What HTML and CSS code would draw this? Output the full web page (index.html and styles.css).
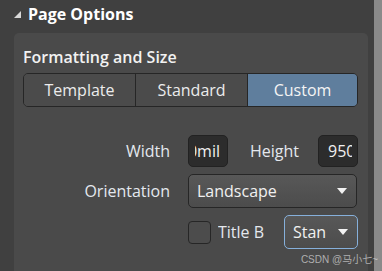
FILE: index.html
```html
<!DOCTYPE html>
<html>
<head>
<meta charset="utf-8">
<link rel="stylesheet" href="styles.css">
</head>
<body>
<div class="frame">
  <div class="main">
    <div class="header">
      <span class="caret"></span>
      <span class="header-title">Page Options</span>
    </div>
    <div class="panel">
      <div class="section-title">Formatting and Size</div>
      <div class="segmented">
        <div class="seg">Template</div>
        <div class="seg">Standard</div>
        <div class="seg active">Custom</div>
      </div>
      <div class="form">
        <div class="row">
          <div class="label">Width</div>
          <div class="field small"><div class="clip end"><span>1000mil</span></div></div>
          <div class="label mid">Height</div>
          <div class="field small"><div class="clip"><span>9500mil</span></div></div>
        </div>
        <div class="row">
          <div class="label">Orientation</div>
          <div class="select wide"><span>Landscape</span><span class="arrow"></span></div>
        </div>
        <div class="row">
          <div class="label"></div>
          <div class="check"></div>
          <div class="check-label">Title B</div>
          <div class="select focus narrow"><span>Stan</span><span class="arrow"></span></div>
        </div>
      </div>
    </div>
  </div>
  <div class="strip"></div>
</div>
<div class="watermark">CSDN @马小七~</div>
</body>
</html>
```
FILE: styles.css
```css
html, body {
  margin: 0;
  padding: 0;
}
body {
  width: 382px;
  height: 271px;
  overflow: hidden;
  background: #404040;
  font-family: "Open Sans", "Noto Sans", "Noto Sans CJK SC", sans-serif;
  color: #e8e8e8;
  position: relative;
}
.frame {
  display: flex;
  height: 271px;
}
.main {
  flex: 1;
  display: flex;
  flex-direction: column;
}
.strip {
  width: 9px;
  background: #8a8a8a;
}
.header {
  height: 33px;
  display: flex;
  align-items: center;
  padding-left: 14px;
  box-sizing: border-box;
  padding-bottom: 5px;
}
.caret {
  width: 0;
  height: 0;
  border-left: 7px solid transparent;
  border-bottom: 7px solid #d8d8d8;
  margin-right: 7px;
}
.header-title {
  font-weight: 700;
  font-size: 16px;
  color: #ffffff;
}
.panel {
  flex: 1;
  margin-left: 14px;
  margin-right: 6px;
  background: #4a4a4a;
  border-radius: 5px 5px 0 0;
  padding: 14px 10px 0 9px;
}
.section-title {
  font-size: 16px;
  font-weight: 600;
  color: #f2f2f2;
  line-height: 20px;
  height: 26px;
}
.segmented {
  display: flex;
  height: 34px;
  box-sizing: border-box;
  border: 1px solid #262626;
  border-radius: 5px;
  overflow: hidden;
}
.seg {
  flex: 1;
  display: flex;
  align-items: center;
  justify-content: center;
  font-size: 16px;
  color: #ececec;
  background: #4b4b4b;
}
.seg + .seg {
  border-left: 1px solid #262626;
}
.seg.active {
  background: #5f7e9d;
  color: #f4f4f4;
  flex: 0 0 109px;
}
.form {
  margin-top: 28px;
  display: flex;
  flex-direction: column;
  gap: 7px;
}
.row {
  display: flex;
  align-items: center;
  height: 34px;
}
.row:first-child {
  height: 32px;
}
.label {
  width: 147px;
  text-align: right;
  font-size: 16px;
  color: #e4e8ee;
  margin-right: 18px;
}
.label.mid {
  width: auto;
  margin: 0 19px 0 22px;
}
.field {
  height: 32px;
  box-sizing: border-box;
  background: #2c2c2c;
  border: 1px solid #222;
  border-radius: 5px;
  display: flex;
  align-items: center;
  font-size: 16px;
  color: #f0f0f0;
}
.field.small {
  width: 40px;
  padding: 0 5px 0 6px;
}
.clip {
  flex: 1;
  overflow: hidden;
  white-space: nowrap;
  display: flex;
}
.clip.end {
  justify-content: flex-end;
  padding-right: 2px;
}
.clip span {
  flex: none;
}
.clip:not(.end) {
  padding-left: 3px;
}
.select {
  height: 34px;
  box-sizing: border-box;
  border: 1px solid #262626;
  border-radius: 5px;
  background: linear-gradient(#585858, #4c4c4c);
  display: flex;
  align-items: center;
  justify-content: space-between;
  padding: 0 9px 0 8px;
  font-size: 16px;
  color: #f0f0f0;
}
.select.wide {
  width: 169px;
}
.select.narrow {
  width: 74px;
  padding-left: 8px;
}
.select.focus {
  border-color: #86b0db;
}
.arrow {
  width: 0;
  height: 0;
  border-left: 5px solid transparent;
  border-right: 5px solid transparent;
  border-top: 6px solid #f2f2f2;
}
.check {
  width: 23px;
  height: 23px;
  box-sizing: border-box;
  border: 1px solid #262626;
  border-radius: 4px;
  background: #4c4c4c;
  margin-right: 7px;
}
.check-label {
  width: 66px;
  overflow: hidden;
  white-space: nowrap;
  font-size: 16px;
  color: #e4e8ee;
}
.watermark {
  position: absolute;
  right: 4px;
  bottom: 5px;
  font-family: "Liberation Sans", "Noto Sans CJK SC", sans-serif;
  font-size: 10px;
  color: rgba(210, 210, 210, 0.75);
}
```
